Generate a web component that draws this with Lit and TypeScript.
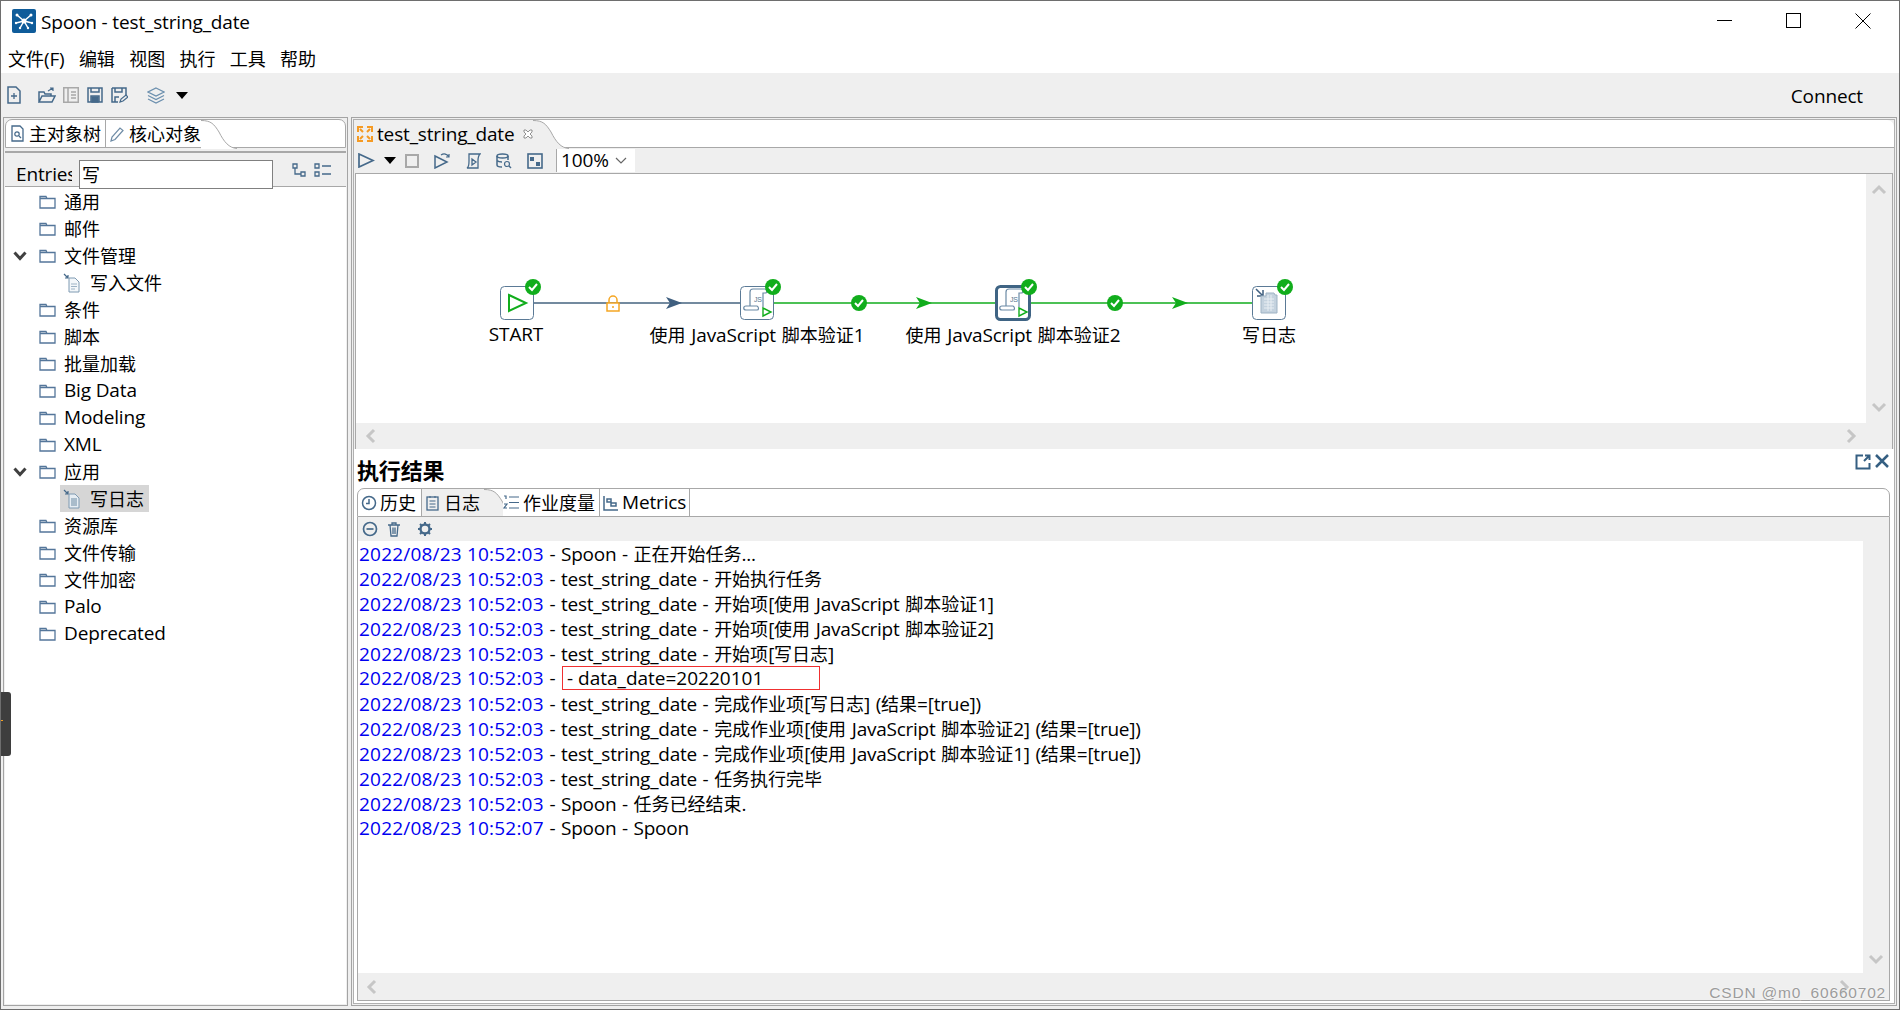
import { LitElement, html, css, svg } from "lit";
import { customElement } from "lit/decorators.js";

const mix = (s: string) =>
  s.split(/([\u3000-\u9fff\uff00-\uffef]+)/).map((p, i) => (i % 2 ? html`<span class="c">${p}</span>` : p));

const I = "#45698a";
const G = "#11ad1c";

const check = (x: number, y: number) => svg`<circle cx=${x} cy=${y} r="8" fill=${G}/><path d="M${x - 4} ${y}l3 3 5-6" fill="none" stroke="#fff" stroke-width="2"/>`;
const arrow = (x: number, y: number, c: string) => svg`<path d="M${x} ${y - 6}L${x + 16} ${y}L${x} ${y + 6}L${x + 4} ${y}z" fill=${c}/>`;
const box = (x: number, y: number, s: number, sel = false) =>
  svg`<rect x=${x + (sel ? 1.5 : 0.5)} y=${y + (sel ? 1.5 : 0.5)} width=${sel ? s - 3 : s - 1} height=${sel ? s - 3 : s - 1} rx="4" fill="#fff" stroke=${sel ? "#3f6484" : "#5b7a96"} stroke-width=${sel ? 3 : 1}/>`;
const js = (x: number, y: number) => svg`<g fill="none" stroke="#6b8aa5" stroke-width="1.2">
  <path d=${`M${x + 10} ${y + 6}c0-2 1-3 3-3h12c2 0 2 3 1 4h-3v14M${x + 10} ${y + 6}v14h-4c-3 0-3 4 0 4h11c2 0 2-3 0-4h-7`}/></g>
  <text x=${x + 14} y=${y + 16} font-size="7" fill="#55758f" font-family="Liberation Sans, sans-serif">JS</text>
  <path d=${`M${x + 23} ${y + 22}l8 4-8 4z`} fill="#fff" stroke=${G} stroke-width="1.4"/>`;

const folder = html`<svg class="fo" width="17" height="15" viewBox="0 0 17 15"><path d="M1 2.500h6l1 2h8v9.500H1zM1 4.500h7" fill="none" stroke="#54769a" stroke-width="1.300"/></svg>`;
const docIcon = (dark: boolean) => html`<svg width="18" height="20" viewBox="0 0 18 20"><path d="M6 5h6l4 4v10H6z" fill=${dark ? "#e6edf3" : "#f3f7fa"} stroke="#7f9ab2"/><path d="M1 1l4 4M5 2v3H2" fill="none" stroke=${I} stroke-width="1.200"/>${dark
    ? svg`<path d="M8 9h6v8H8z" fill="#a9bccb"/>`
    : svg`<path d="M8 11h6M8 13.500h6M8 16h4" stroke="#9db3c5"/>`}</svg>`;
const chev = (d: string) => html`<svg class="ch" width="18" height="18" viewBox="0 0 18 18"><path d=${d} fill="none" stroke="#c6c6c6" stroke-width="3"/></svg>`;
const UP = "M3 12l6-6 6 6", DN = "M3 6l6 6 6-6", LF = "M12 3l-6 6 6 6", RT = "M6 3l6 6-6 6";

const ic = (w: number, h: number, body: unknown) => html`<svg width=${w} height=${h} viewBox="0 0 ${w} ${h}" fill="none" stroke=${I} stroke-width="1.500">${body}</svg>`;

const curve = html`<svg class="cv" width="36" height="29" viewBox="0 0 36 29"><path d="M0 0.500C10 0.500 13 4 18 12C23 22 28 28 36 28.500V29H0z" fill="currentColor" stroke="none"/><path d="M0 0.500C10 0.500 13 4 18 12C23 22 28 28 36 28.500" fill="none" stroke="#a8a8a8"/></svg>`;

const tree: [string, number][] = [
  ["通用", 0], ["邮件", 0], ["文件管理", 1], ["写入文件", 2], ["条件", 0], ["脚本", 0], ["批量加载", 0],
  ["Big Data", 0], ["Modeling", 0], ["XML", 0], ["应用", 1], ["写日志", 3], ["资源库", 0], ["文件传输", 0],
  ["文件加密", 0], ["Palo", 0], ["Deprecated", 0],
];

const T3 = "2022/08/23 10:52:03";
const log: [string, string][] = [
  [T3, " - Spoon - 正在开始任务..."],
  [T3, " - test_string_date - 开始执行任务"],
  [T3, " - test_string_date - 开始项[使用 JavaScript 脚本验证1]"],
  [T3, " - test_string_date - 开始项[使用 JavaScript 脚本验证2]"],
  [T3, " - test_string_date - 开始项[写日志]"],
  [T3, "!"],
  [T3, " - test_string_date - 完成作业项[写日志] (结果=[true])"],
  [T3, " - test_string_date - 完成作业项[使用 JavaScript 脚本验证2] (结果=[true])"],
  [T3, " - test_string_date - 完成作业项[使用 JavaScript 脚本验证1] (结果=[true])"],
  [T3, " - test_string_date - 任务执行完毕"],
  [T3, " - Spoon - 任务已经结束."],
  ["2022/08/23 10:52:07", " - Spoon - Spoon"],
];

const labels: [string, number][] = [
  ["START", 516], ["使用 JavaScript 脚本验证1", 757], ["使用 JavaScript 脚本验证2", 1013], ["写日志", 1269],
];

@customElement("app-root")
export class AppRoot extends LitElement {
  static styles = css`
    :host { display: block; width: 1900px; height: 1010px; position: relative; box-sizing: border-box; overflow: hidden;
      border: 1px solid #6e6e6e; background: #fff; color: #000; letter-spacing: -0.15px;
      font: 19px/25px "Open Sans", "Noto Sans CJK SC", sans-serif; }
    * { box-sizing: border-box; }
    svg { display: block; flex: none; }
    .c { font-family: "Noto Sans CJK SC", sans-serif; font-size: 18px; letter-spacing: 0; }
    .root { display: flex; flex-direction: column; height: 100%; }
    .title { height: 39px; display: flex; align-items: center; padding-left: 11px; gap: 5px; white-space: nowrap; }
    .title > span { padding-top: 3px; }
    .wbtns { margin-left: auto; display: flex; align-items: center; padding-right: 28px; gap: 54px; }
    .menu { height: 33px; display: flex; align-items: center; padding: 5px 0 0 7px; gap: 14.3px; }
    .tb { height: 44px; background: #efefef; display: flex; align-items: center; padding-left: 6px; }
    .tb .conn { margin-left: auto; margin-right: 36px; padding-top: 2px; }
    .main { flex: 1; min-height: 0; background: #efefef; display: flex; gap: 3px; padding: 0 2px 3px; }
    .left { width: 345px; border: 1px solid #a4a4a4; padding: 1px; display: flex; flex-direction: column; background: #efefef; }
    .tabs { height: 29px; flex: none; display: flex; align-items: stretch; background: #fff; border: 1px solid #a8a8a8; border-radius: 7px 7px 0 0; color: #000; }
    .tab { display: flex; align-items: center; gap: 4px; white-space: nowrap; }
    .tab.sep { border-right: 1px solid #a8a8a8; }
    .cv { align-self: stretch; margin-left: 0; }
    .band { height: 5px; flex: none; border-bottom: 2px solid #a8a8a8; }
    .body { flex: 1; background: #fff; display: flex; flex-direction: column; min-height: 0; }
    .ent { height: 34px; flex: none; background: #efefef; border-bottom: 1px solid #a8a8a8; display: flex; align-items: flex-start; padding: 7px 15px 0 11px; }
    .ent .lb { width: 56px; overflow: hidden; white-space: nowrap; line-height: 29px; margin-right: 7px; }
    .search { width: 194px; height: 29px; background: #fff; border: 1px solid #808080; line-height: 27px; padding-left: 2px; position: relative; z-index: 1; }
    .ent .ics { margin-left: auto; display: flex; gap: 8px; padding-top: 3px; }
    .tree { padding-top: 1px; }
    .row { height: 27px; display: flex; align-items: center; white-space: nowrap; line-height: 27px; }
    .row .ex { width: 34px; padding-left: 8px; flex: none; }
    .row .fo { margin-right: 8px; }
    .row.ch1 { padding-left: 55px; }
    .row.ch1 .tx { padding: 0 5px 0 9px; }
    .row .hl { display: flex; align-items: center; height: 27px; padding-left: 3px; }
    .row.sel .hl { background: #d6d6d6; }
    .right { flex: 1; min-width: 0; border: 1px solid #a4a4a4; padding: 1px; display: flex; flex-direction: column; background: #efefef; }
    .edit { height: 330px; flex: none; border: 1px solid #b0b0b0; border-bottom: 0; display: flex; flex-direction: column; }
    .edit .tabs { border: 0; border-bottom: 1px solid #a8a8a8; height: 28px; border-radius: 7px 7px 0 0; }
    .etab { background: #efefef; display: flex; align-items: center; padding-left: 3px; gap: 4px; white-space: nowrap; height: 28px; color: #efefef; }
    .etab > span { color: #000; }
    .etb { height: 25px; flex: none; display: flex; align-items: center; padding-left: 4px; }
    .combo { margin-left: 13px; width: 79px; height: 23px; background: #fff; border-left: 1px solid #a8a8a8; display: flex; align-items: center; padding-left: 4px; line-height: 23px; justify-content: space-between; padding-right: 8px; }
    .frame { margin: 0 1px; border: 1px solid #a8a8a8; display: flex; flex-direction: column; height: 277px; flex: none; }
    .cw { flex: 1; display: flex; min-height: 0; }
    .canvas { flex: 1; background: #fff; position: relative; }
    .canvas svg { position: absolute; inset: 0; }
    .label { position: absolute; top: 147px; transform: translateX(-50%); white-space: nowrap; line-height: 26px; word-spacing: 1px; }
    .vs { width: 26px; flex: none; display: flex; flex-direction: column; justify-content: space-between; align-items: center; padding: 7px 0; }
    .hs { height: 26px; flex: none; display: flex; justify-content: space-between; align-items: center; padding: 0 32px 0 6px; }
    .lower { flex: 1; min-height: 0; background: #fff; border: 1px solid #b0b0b0; border-top: 0; display: flex; flex-direction: column; padding: 0 4px 2px 3px; }
    .lh { height: 39px; flex: none; display: flex; justify-content: space-between; align-items: flex-start; }
    .lh b { font: bold 22px/30px "Noto Sans CJK SC", sans-serif; margin-top: 5px; }
    .lh .ics { display: flex; gap: 4px; padding: 5px 1px 0 0; }
    .ltabs { height: 29px; flex: none; display: flex; border: 1px solid #a8a8a8; border-radius: 7px 7px 0 0; background: #fff; }
    .ltabs .etab { height: 27px; padding-left: 0; }
    .ltabs .tab { padding: 0 2px 0 2px; gap: 3px; }
    .lframe { flex: 1; min-height: 0; border: 1px solid #a8a8a8; border-top: 0; display: flex; flex-direction: column; background: #efefef; }
    .ltb { height: 24px; flex: none; display: flex; align-items: center; padding-left: 4px; }
    .lw { flex: 1; min-height: 0; display: flex; }
    .logt { flex: 1; background: #fff; padding-left: 1px; white-space: nowrap; }
    .ln { height: 25px; word-spacing: 1px; letter-spacing: -0.25px; }
    .ts { color: #0000f0; letter-spacing: 0.2px; word-spacing: 0; }
    .red { display: inline-block; width: 258px; height: 24px; border: 1px solid #f03030; line-height: 22px; padding-left: 4px; vertical-align: top; margin-left: 1px; word-spacing: 0; letter-spacing: 0; }
    .handle { position: absolute; left: -1px; top: 691px; width: 11px; height: 64px; background: #3e3e3e; border-radius: 0 3px 3px 0; }
    .handle i { position: absolute; left: 0; top: 28px; width: 3px; height: 1px; background: #f5a020; }
    .wm { position: absolute; right: 13px; top: 982px; font: 15.500px/20px "Liberation Sans", sans-serif; letter-spacing: 0.8px; color: #9c9c9c; text-shadow: 0 0 2px #fff; white-space: nowrap; }
  `;

  render() {
    return html`<div class="root">
      <div class="title">
        <svg width="24" height="24" viewBox="0 0 24 24"><rect width="24" height="24" rx="2" fill="#0f5c9a"/><g stroke="#fff" stroke-width="1.500"><path d="M12 12L5 6M12 12L19 6M12 12L4 14M12 12L20 14M12 12L8 19M12 12L16 19"/></g><g fill="#fff"><circle cx="12" cy="12" r="2.500"/><circle cx="5" cy="6" r="1.500"/><circle cx="19" cy="6" r="1.500"/><circle cx="4" cy="14" r="1.200"/><circle cx="20" cy="14" r="1.200"/><circle cx="8" cy="19" r="1.200"/><circle cx="16" cy="19" r="1.200"/></g></svg>
        <span>Spoon - test_string_date</span>
        <div class="wbtns">
          <svg width="15" height="15" viewBox="0 0 15 15"><path d="M0 7.500h15" stroke="#000"/></svg>
          <svg width="15" height="15" viewBox="0 0 15 15"><rect x=".5" y=".5" width="14" height="14" fill="none" stroke="#000"/></svg>
          <svg width="16" height="16" viewBox="0 0 16 16"><path d="M.5.5l15 15M15.500.5l-15 15" stroke="#000"/></svg>
        </div>
      </div>
      <div class="menu">
        ${["文件(F)", "编辑", "视图", "执行", "工具", "帮助"].map((m) => html`<span>${mix(m)}</span>`)}
      </div>
      <div class="tb">
        ${ic(14, 18, svg`<path d="M1 1h8l4 4v12H1z"/><path d="M4 10h6M7 7v6" stroke-width="1.300"/>`)}
        <span style="width:17px"></span>
        ${ic(18, 16, svg`<path d="M1 15V5h5l1 2h6v2M1 15l3-6h13l-3 6z"/><path d="M10 4l5-3M12 1h3v3" stroke-width="1.200"/>`)}
        <span style="width:7px"></span>
        <svg width="16" height="16" viewBox="0 0 16 16" fill="none" stroke="#a8a8a8" stroke-width="1.500"><rect x=".75" y=".75" width="14.500" height="14.500"/><path d="M5 1v14M8 5h5M8 8h5M8 11h5"/></svg>
        <span style="width:8px"></span>
        ${ic(16, 16, svg`<path d="M1 1h14v14H1z"/><path d="M4 1v4h8V1M4 15V9h8v6" /><path d="M5 10h6v5H5z" fill=${I}/>`)}
        <span style="width:8px"></span>
        ${ic(17, 17, svg`<path d="M1 1h14v7M1 1v14h6M4 1v4h7V1M4 15v-5h4"/><path d="M9 15l1-3 5-4 2 2-5 4z" stroke-width="1.200"/>`)}
        <span style="width:19px"></span>
        ${ic(18, 17, svg`<path d="M9 1l8 4-8 4-8-4zM1 8.500l8 4 8-4M1 12l8 4 8-4" stroke="#6b8fae" stroke-width="1.200"/>`)}
        <span style="width:11px"></span>
        <svg width="12" height="7" viewBox="0 0 12 7"><path d="M0 0h12L6 7z"/></svg>
        <span class="conn">Connect</span>
      </div>
      <div class="main">
        <div class="left">
          <div class="tabs">
            <div class="tab sep" style="width:100px;padding-left:5px;gap:5px">
              ${ic(13, 17, svg`<path d="M1 1h8l3 3v12H1z" stroke-width="1.300"/><circle cx="6" cy="9" r="2.200" stroke-width="1.200"/><path d="M8 11l2 2" stroke-width="1.200"/>`)}
              <span>${mix("主对象树")}</span>
            </div>
            <div class="tab" style="padding-left:4px;gap:5px">
              ${ic(14, 16, svg`<path d="M1 15l1-4 8-9 3 2.500-8 9z" stroke="#6f8ca6" stroke-width="1.200"/>`)}
              <span>${mix("核心对象")}</span>
            </div>
            <div style="color:#fff">${curve}</div>
          </div>
          <div class="band"></div>
          <div class="body">
            <div class="ent">
              <div class="lb">Entries</div>
              <div class="search">${mix("写")}</div>
              <div class="ics">
                ${ic(14, 14, svg`<path d="M1 1h4v4H1zM9 9h4v4H9zM3 5v6h6" stroke-width="1.300"/>`)}
                ${ic(17, 14, svg`<path d="M1 1h4v4H1zM1 9h4v4H1zM8 3h9M8 11h9" stroke-width="1.300"/>`)}
              </div>
            </div>
            <div class="tree">
              ${tree.map(([t, k]) =>
                k === 2 || k === 3
                  ? html`<div class="row ch1 ${k === 3 ? "sel" : ""}"><div class="hl">${docIcon(k === 3)}<span class="tx">${mix(t)}</span></div></div>`
                  : html`<div class="row"><div class="ex">${k === 1
                      ? html`<svg width="14" height="10" viewBox="0 0 14 10"><path d="M1.500 1.500L7 7.500l5.500-6" fill="none" stroke="#404040" stroke-width="3"/></svg>`
                      : ""}</div>${folder}<span>${mix(t)}</span></div>`
              )}
            </div>
          </div>
        </div>
        <div class="right">
          <div class="edit">
            <div class="tabs">
              <div class="etab">
                <svg width="16" height="16" viewBox="0 0 16 16" fill="none" stroke="#f59a23" stroke-width="2"><path d="M6 1H1v5M10 1h5v5M6 15H1v-5M10 15h5v-5M3 3l3 3M13 3l-3 3M3 13l3-3M13 13l-3-3"/></svg>
                <span>test_string_date</span>
                <svg width="10" height="10" viewBox="0 0 10 10" style="margin-left:4px"><path d="M1 1h2l2 2 2-2h2v2L7 5l2 2v2H7L5 7 3 9H1V7l2-2-2-2z" fill="#fff" stroke="#777" stroke-width=".8"/></svg>
              </div>
              <div style="color:#efefef">${curve}</div>
            </div>
            <div class="etb">
              ${ic(17, 15, svg`<path d="M1 1l14 6.500L1 14z" stroke-width="1.700"/>`)}
              <span style="width:9px"></span>
              <svg width="12" height="7" viewBox="0 0 12 7"><path d="M0 0h12L6 7z"/></svg>
              <span style="width:9px"></span>
              <svg width="14" height="14" viewBox="0 0 14 14"><rect x="1" y="1" width="12" height="12" fill="none" stroke="#a8a8a8" stroke-width="2"/></svg>
              <span style="width:15px"></span>
              ${ic(17, 16, svg`<path d="M1 3l12 6-12 6z"/><path d="M7 2c3-2 6-1 8 2M15 1v3h-3" stroke-width="1.200"/>`)}
              <span style="width:14px"></span>
              ${ic(16, 16, svg`<path d="M4 1h11c-2 2-2 4-2 7v7H2c2-1 2-4 2-7zM7 6l4 3-4 3z" stroke-width="1.300"/>`)}
              <span style="width:15px"></span>
              ${ic(16, 16, svg`<ellipse cx="6.500" cy="3" rx="5.500" ry="2"/><path d="M1 3v9c0 1 2 2 5 2M12 3v4M1 7.500c1 1 3 1.500 5 1.500"/><circle cx="11" cy="11" r="2.500" stroke-width="1.200"/><path d="M13 13l2 2"/>`)}
              <span style="width:15px"></span>
              ${ic(16, 16, svg`<rect x="1" y="1" width="14" height="14" stroke-width="1.600"/><rect x="3" y="4" width="4" height="4" fill=${I} stroke="none"/><rect x="9" y="9" width="4" height="4" fill=${I} stroke="none"/>`)}
              <div class="combo"><span>100%</span>
                <svg width="12" height="7" viewBox="0 0 12 7"><path d="M1 1l5 5 5-5" fill="none" stroke="#666" stroke-width="1.200"/></svg>
              </div>
            </div>
            <div class="frame">
              <div class="cw">
                <div class="canvas">
                  <svg width="1509" height="248" viewBox="356 173 1509 248">
                    <path d="M534 302H740" stroke="#45637f" stroke-width="1.500"/>
                    <path d="M774 302H1252" stroke=${G} stroke-width="1.500"/>
                    ${arrow(666, 302, "#3f5f7f")}${arrow(916, 302, G)}${arrow(1172, 302, G)}
                    <g fill="none" stroke="#f5a623" stroke-width="1.500"><rect x="607" y="302" width="12" height="8" fill="#fff"/><path d="M609 302v-3a4 4 0 0 1 8 0v3"/></g>
                    <circle cx="613" cy="306" r="1" fill="#f5a623"/>
                    ${box(500, 285, 34)}
                    <path d="M509 294l17 8-17 8z" fill="#fff" stroke=${G} stroke-width="2"/>
                    ${box(740, 285, 34)}${js(740, 285)}
                    ${box(995, 284, 36, true)}${js(996, 285)}
                    ${box(1252, 285, 34)}
                    <path d="M1256 288l7 7M1263 289v6h-6" fill="none" stroke="#3f5f7f" stroke-width="1.500"/>
                    <path d="M1261 298v-3h5v-3h8l1 2h2v18h-16z" fill="#c4d2de" stroke="#9fb3c4"/>
                    <path d="M1264 298h10M1264 301h10M1264 304h10M1264 307h10M1268 294v16M1271 294v16" stroke="#e8eef3" stroke-width="1"/>
                    ${check(533, 286)}${check(773, 286)}${check(1029, 286)}${check(1285, 286)}${check(859, 302)}${check(1115, 302)}
                  </svg>
                  ${labels.map(([t, x]) => html`<div class="label" style="left:${x - 356}px">${mix(t)}</div>`)}
                </div>
                <div class="vs">${chev(UP)}${chev(DN)}</div>
              </div>
              <div class="hs">${chev(LF)}${chev(RT)}</div>
            </div>
          </div>
          <div class="lower">
            <div class="lh">
              <b>执行结果</b>
              <div class="ics">
                ${ic(16, 16, svg`<path d="M8 1.500H1.500v13h13V9M9 7l5-5M10 1.500h4.500V6" stroke="#355f82" stroke-width="2"/>`)}
                ${ic(14, 14, svg`<path d="M1 1l12 12M13 1L1 13" stroke="#355f82" stroke-width="2.500"/>`)}
              </div>
            </div>
            <div class="ltabs">
              <div class="tab sep" style="width:64px;padding-left:3px">
                ${ic(16, 16, svg`<circle cx="8" cy="8" r="6.500"/><path d="M8 4v4.500H5"/>`)}<span>${mix("历史")}</span>
              </div>
              <div class="etab" style="width:62px;padding-left:4px;gap:5px">
                ${ic(13, 16, svg`<rect x="1" y="2" width="11" height="13" stroke-width="1.300"/><path d="M3.500 6h6M3.500 9h6M3.500 12h6M4 1v2M9 1v2" stroke-width="1.100"/>`)}<span>${mix("日志")}</span>
              </div>
              <div style="color:#efefef;width:19px;overflow:hidden">${curve}</div>
              <div class="tab sep" style="width:97px;padding-left:0">
                ${ic(17, 15, svg`<path d="M6 2h10M6 7.500h10M6 13h10M1 1h2v3M1 9h3l-3 4h3" stroke-width="1.200"/>`)}<span>${mix("作业度量")}</span>
              </div>
              <div class="tab sep" style="width:90px;padding-left:3px">
                ${ic(16, 16, svg`<path d="M1 1v14h14M4 4h4v3H4zM8 8h5v3H8z" stroke-width="1.500"/>`)}<span>Metrics</span>
              </div>
            </div>
            <div class="lframe">
              <div class="ltb">
                ${ic(16, 16, svg`<circle cx="8" cy="8" r="6.500" stroke-width="1.700"/><path d="M4.500 8h7" stroke-width="1.700"/>`)}
                <span style="width:10px"></span>
                ${ic(12, 15, svg`<path d="M0 3h12M4 3V1h4v2M2 3l1 11h6l1-11M5 5.500v6.500M7 5.500v6.500" stroke-width="1.300"/>`)}
                <span style="width:17px"></span>
                ${ic(16, 16, svg`<circle cx="8" cy="8" r="4.500" stroke-width="2.400"/><path d="M8 1v2M8 13v2M1 8h2M13 8h2M3 3l1.500 1.500M13 3l-1.500 1.500M3 13l1.500-1.500M13 13l-1.500-1.500" stroke-width="2"/>`)}
              </div>
              <div class="lw">
                <div class="logt">
                  ${log.map(([t, m]) => html`<div class="ln"><span class="ts">${t}</span>${m === "!"
                      ? html` - <span class="red">- data_date=20220101</span>`
                      : mix(m)}</div>`)}
                </div>
                <div class="vs" style="justify-content:flex-end;padding-bottom:5px">${chev(DN)}</div>
              </div>
              <div class="hs" style="padding:0 36px 0 5px;height:27px">${chev(LF)}${chev(RT)}</div>
            </div>
          </div>
        </div>
      </div>
    </div>
    <div class="handle"><i></i></div>
    <div class="wm">CSDN @m0_60660702</div>`;
  }
}
